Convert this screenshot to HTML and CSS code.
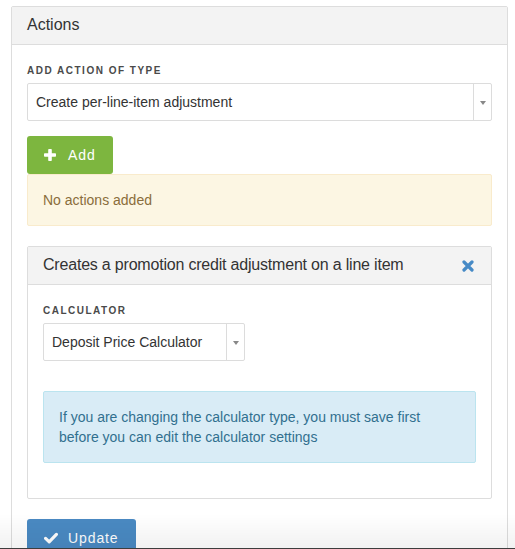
FILE: index.html
```html
<!DOCTYPE html>
<html>
<head>
<meta charset="utf-8">
<link rel="stylesheet" href="styles.css">
</head>
<body>
<div class="page">
  <div class="panel">
    <div class="panel-heading">Actions</div>
    <div class="panel-body">
      <label class="field-label">Add action of type</label>
      <div class="select wide">
        <span class="select-text">Create per-line-item adjustment</span>
        <span class="select-arrow"><span class="caret"></span></span>
      </div>
      <button class="btn btn-success btn-add">
        <svg class="icon" viewBox="0 0 12 12" width="12" height="12"><rect x="0" y="4.2" width="12" height="3.6" rx="0.8" fill="#fff"/><rect x="4.2" y="0" width="3.6" height="12" rx="0.8" fill="#fff"/></svg>
        <span>Add</span>
      </button>
      <div class="alert alert-warning">No actions added</div>

      <div class="panel inner">
        <div class="panel-heading heading-row">
          <span class="title">Creates a promotion credit adjustment on a line item</span>
          <svg class="close" viewBox="0 0 12 12" width="12" height="12"><path d="M2 2 L10 10 M10 2 L2 10" stroke="#468ac6" stroke-width="3.2" stroke-linecap="round"/></svg>
        </div>
        <div class="panel-body inner-body">
          <label class="field-label">Calculator</label>
          <div class="select narrow">
            <span class="select-text">Deposit Price Calculator</span>
            <span class="select-arrow"><span class="caret"></span></span>
          </div>
          <div class="alert alert-info">If you are changing the calculator type, you must save first before you can edit the calculator settings</div>
        </div>
      </div>

      <button class="btn btn-primary btn-update">
        <svg class="icon" viewBox="0 0 14 12" width="14" height="12"><polyline points="1.6,6.4 5.2,9.8 12.4,2.4" fill="none" stroke="#fff" stroke-width="3.2" stroke-linecap="round" stroke-linejoin="round"/></svg>
        <span>Update</span>
      </button>
    </div>
  </div>
</div>
<div class="bottom-fade"></div>
</body>
</html>
```

FILE: styles.css
```css
html, body {
  margin: 0;
  padding: 0;
  background: #fff;
}

body {
  font-family: "Liberation Sans", Arial, sans-serif;
  font-size: 14px;
  color: #333;
}

.page {
  padding: 6px 7px 0 11px;
}

.panel {
  border: 1px solid #ddd;
  border-radius: 2px;
  background: #fff;
}

.panel-heading {
  background: #f3f3f3;
  border-bottom: 1px solid #ddd;
  padding: 9px 15px 11px;
  font-size: 16px;
  line-height: 17px;
  color: #333;
}

.title {
  letter-spacing: -0.2px;
}

.panel-body {
  padding: 16px 15px 15px;
}

.field-label {
  display: block;
  font-size: 10px;
  font-weight: bold;
  letter-spacing: 1.5px;
  text-transform: uppercase;
  line-height: 20px;
  color: #4a4a4a;
  margin-bottom: 2px;
}

.select {
  display: flex;
  height: 36px;
  border: 1px solid #dcdcdc;
  border-radius: 2px;
  background: #fff;
  box-sizing: content-box;
}

.select.narrow {
  width: 200px;
}

.select-text {
  flex: 1;
  padding-left: 8px;
  line-height: 36px;
  font-size: 14px;
  color: #333;
  white-space: nowrap;
}

.select-arrow {
  width: 17px;
  border-left: 1px solid #dcdcdc;
  display: flex;
  align-items: center;
  justify-content: center;
}

.caret {
  width: 0;
  height: 0;
  border-left: 3px solid transparent;
  border-right: 3px solid transparent;
  border-top: 4px solid #888;
  margin-top: 2px;
}

.btn {
  display: flex;
  align-items: center;
  height: 38px;
  border: none;
  border-radius: 3px;
  padding: 0 0 0 17px;
  font-family: "Liberation Sans", Arial, sans-serif;
  font-size: 14px;
  color: #fff;
  letter-spacing: 0.9px;
  cursor: pointer;
}

.btn .icon {
  flex: none;
}

.btn-add {
  width: 86px;
  margin-top: 15px;
  background: #7db63f;
  gap: 12px;
}

.btn-update {
  width: 109px;
  margin-top: 20px;
  background: #4a8ac3;
  gap: 10px;
}

.alert {
  border: 1px solid transparent;
  border-radius: 2px;
  padding: 15px;
  line-height: 20px;
  font-size: 14px;
}

.alert-warning {
  background: #fcf6e3;
  border-color: #f9ebcc;
  color: #8a6d3b;
}

.alert-info {
  background: #d9ecf6;
  border-color: #bbe4ef;
  color: #31708f;
  margin-top: 30px;
  margin-bottom: 20px;
}

.inner {
  margin-top: 20px;
}

.heading-row {
  display: flex;
  align-items: center;
  justify-content: space-between;
  padding-right: 17px;
}

.close {
  flex: none;
  margin-top: 2px;
}

.inner-body {
  padding-bottom: 15px;
}

.bottom-fade {
  position: fixed;
  left: 0;
  right: 0;
  bottom: 0;
  height: 34px;
  background: linear-gradient(to bottom, rgba(0,0,0,0) 0%, rgba(0,0,0,0.05) 95%);
  border-bottom: 1px solid #3d3d3d;
  pointer-events: none;
}
```
